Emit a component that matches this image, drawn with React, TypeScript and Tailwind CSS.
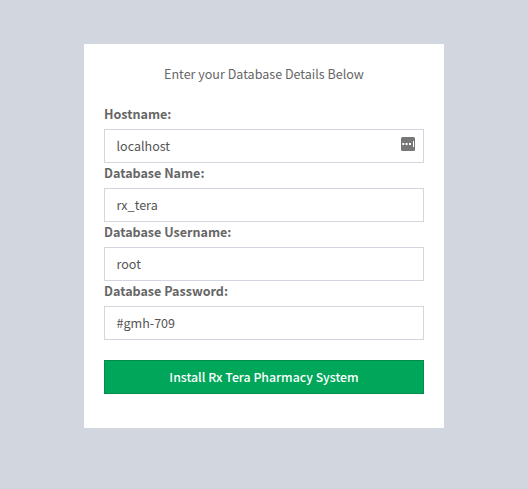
const fields = [
  { label: 'Hostname:', value: 'localhost', icon: true },
  { label: 'Database Name:', value: 'rx_tera', icon: false },
  { label: 'Database Username:', value: 'root', icon: false },
  { label: 'Database Password:', value: '#gmh-709', icon: false },
];

export default function App() {
  return (
    <div className="min-h-screen bg-[#d2d6de] pt-11 font-['Source_Sans_Pro','Noto_Sans_CJK_SC',sans-serif] text-[12.55px] leading-5 text-[#666]">
      <main className="mx-auto h-96 w-[360px] bg-white px-5 pt-5">
        <p className="mb-5 text-center">Enter your Database Details Below</p>
        <form>
          {fields.map((f) => (
            <div key={f.label}>
              <label className="block h-[25px] font-bold">{f.label}</label>
              <div className="flex h-[34px] items-center justify-between border border-[#d2d6de] pl-[11.5px] pr-2 text-[#555]">
                <span>{f.value}</span>
                {f.icon && (
                  <svg className="mb-1 h-3.5 w-3.5" viewBox="0 0 14 14">
                    <rect width="14" height="14" rx="1.5" fill="#777" />
                    <path d="M1.3 6h2v2h-2zM4.6 6h2v2h-2zM8 6h2v2H8zM12 4h1v6h-1z" fill="#fff" />
                  </svg>
                )}
              </div>
            </div>
          ))}
          <button type="button" className="mt-5 h-[34px] w-full border border-[#008d4c] bg-[#00a65a] text-[12.3px] font-medium text-white">
            Install Rx Tera Pharmacy System
          </button>
        </form>
      </main>
    </div>
  );
}
